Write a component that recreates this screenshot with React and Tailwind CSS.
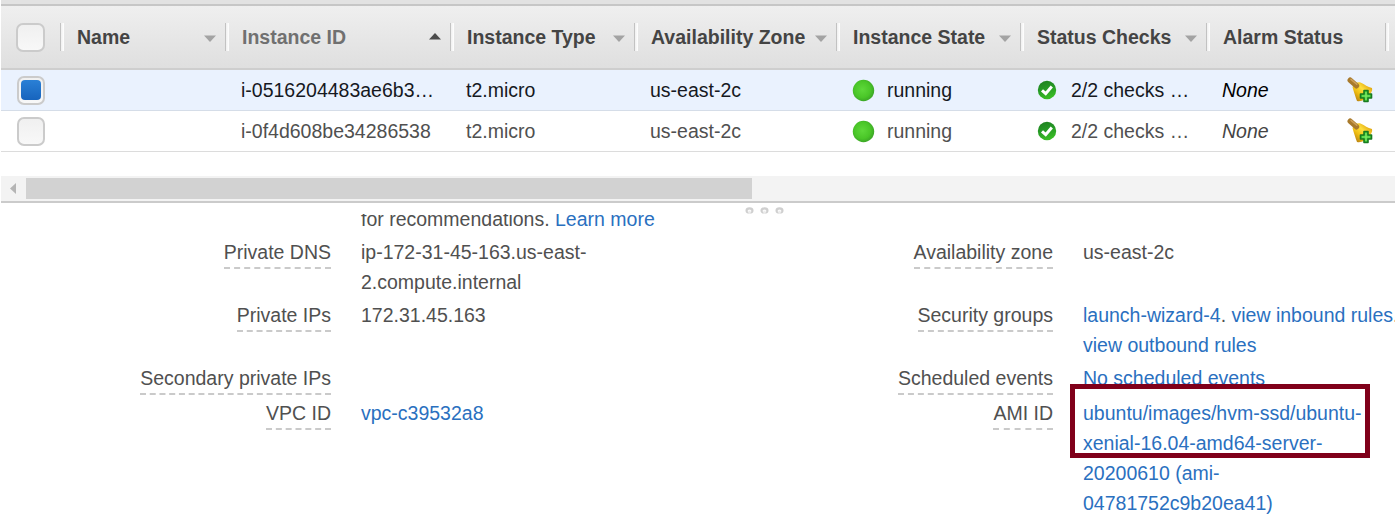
const columns = [
  { title: "Name", width: "w-[165px]", sort: "down" },
  { title: "Instance ID", width: "w-[225px]", sort: "up", muted: true },
  { title: "Instance Type", width: "w-[184px]", sort: "down" },
  { title: "Availability Zone", width: "w-[202px]", sort: "down" },
  { title: "Instance State", width: "w-[184px]", sort: "down" },
  { title: "Status Checks", width: "w-[186px]", sort: "down" },
  { title: "Alarm Status", width: "w-[179px]" },
];

const instances = [
  { id: "i-0516204483ae6b3…", selected: true },
  { id: "i-0f4d608be34286538", selected: false },
];

function SortArrow({ direction }) {
  if (direction === "up") {
    return (
      <svg className="mt-[-1px] h-[7px] w-3 shrink-0" viewBox="0 0 12 7">
        <path d="M0 6.5 6 0l6 6.500z" fill="#4c4c4c" />
      </svg>
    );
  }
  return (
    <svg className="mt-[2px] h-[7px] w-3 shrink-0" viewBox="0 0 12 7">
      <path d="M0 .5h12L6 7z" fill="#a3a3a3" />
    </svg>
  );
}

function Checkbox({ checked, className }) {
  return (
    <div
      className={`flex items-center justify-center rounded-[7px] border-2 border-[#cbcbcb] bg-linear-to-b from-[#f0f0f0] to-[#f8f8f8] ${className}`}
    >
      {checked && <div className="h-[20px] w-[20px] rounded-[4px] bg-linear-to-b from-[#2a80d6] to-[#1764bd]" />}
    </div>
  );
}

function RunningIcon() {
  return (
    <svg className="h-[23px] w-[23px]" viewBox="0 0 23 23">
      <defs>
        <radialGradient id="run" cx="0.45" cy="0.45" r="0.58">
          <stop offset="0" stopColor="#5ed83a" />
          <stop offset="0.65" stopColor="#4ac628" />
          <stop offset="1" stopColor="#3aa326" />
        </radialGradient>
      </defs>
      <circle cx="11.500" cy="11.500" r="10.700" fill="url(#run)" />
    </svg>
  );
}

function CheckIcon() {
  return (
    <svg className="h-[20px] w-[20px]" viewBox="0 0 20 20">
      <defs>
        <linearGradient id="chk" x1="0" y1="0" x2="0.3" y2="1">
          <stop offset="0" stopColor="#1d7d20" />
          <stop offset="0.5" stopColor="#259825" />
          <stop offset="1" stopColor="#38bb24" />
        </linearGradient>
      </defs>
      <circle cx="10" cy="10" r="9.200" fill="url(#chk)" />
      <path d="M5 10.300 8.700 13.700 14.800 6.500" fill="none" stroke="#fff" strokeWidth="3" />
    </svg>
  );
}

function BellIcon() {
  return (
    <svg className="h-[26px] w-[26px]" viewBox="0 0 26 26">
      <defs>
        <linearGradient id="bell" x1="0" y1="1" x2="1" y2="0">
          <stop offset="0.15" stopColor="#c08a12" />
          <stop offset="0.35" stopColor="#efbd12" />
          <stop offset="0.58" stopColor="#ffdf3c" />
          <stop offset="0.85" stopColor="#dfa510" />
        </linearGradient>
      </defs>
      <path
        d="M5.500 10C7 6.500 10 4.800 13.500 5.500c4.500 2 7 4.500 11.500 5.500.8 2.500-.8 5.500-4 8.800-3 3-6.500 5-11 4.200C8.500 20 7 15.500 5.500 10z"
        fill="url(#bell)"
      />
      <path d="M3.200 3.200 9.500 8.800" stroke="#a87a2c" strokeWidth="5.400" strokeLinecap="round" />
      <path d="M4 2.400 9.800 7.300" stroke="#cda058" strokeWidth="1.500" strokeLinecap="round" />
      <path
        d="M17 13.500h4v3.500h3.500v4H21v3.500h-4V21h-3.500v-4H17z"
        fill="#3fcb35"
        stroke="#187a20"
        strokeWidth="1.600"
        strokeLinejoin="round"
      />
      <path d="M19 15v8M15 19h8" stroke="#86ea6c" strokeWidth="1.200" />
    </svg>
  );
}

function HeaderCell({ column }) {
  return (
    <div className={`flex shrink-0 items-center ${column.width}`}>
      <div className="h-[28px] w-[4px] shrink-0 border-l border-[#c2c2c2] bg-linear-to-r from-[#efefef] to-white" />
      <div className="flex flex-1 items-center justify-between pr-[9px] pl-[13px]">
        <span className={`font-bold whitespace-nowrap ${column.muted ? "text-[#707070]" : "text-[#444]"}`}>
          {column.title}
        </span>
        {column.sort && <SortArrow direction={column.sort} />}
      </div>
    </div>
  );
}

function InstanceRow({ instance }) {
  const tone = instance.selected
    ? "bg-[#eaf2fe] border-[#d5dde8] text-[#16191f]"
    : "bg-white border-[#dcdcdc] text-[#505050]";
  return (
    <div className={`flex h-[41px] items-center border-b whitespace-nowrap ${tone}`}>
      <div className="w-[240px] shrink-0 pl-4">
        <Checkbox checked={instance.selected} className="h-[29px] w-[28px]" />
      </div>
      <div className="w-[225px] shrink-0">{instance.id}</div>
      <div className="w-[184px] shrink-0">t2.micro</div>
      <div className="w-[202px] shrink-0">us-east-2c</div>
      <div className="flex w-[185px] shrink-0 items-center gap-[12px]">
        <RunningIcon />
        running
      </div>
      <div className="flex w-[185px] shrink-0 items-center gap-[14px]">
        <CheckIcon />
        2/2 checks …
      </div>
      <div className={`w-[125px] shrink-0 italic ${instance.selected ? "text-black" : "text-[#444]"}`}>None</div>
      <BellIcon />
    </div>
  );
}

function Detail({ label, tall, children }) {
  return (
    <div className={`flex ${tall ? "min-h-[60px]" : "min-h-[32px]"}`}>
      <div className="flex flex-1 items-start justify-end">
        {label && <span className="border-b-2 border-dashed border-[#cacaca] whitespace-nowrap">{label}</span>}
      </div>
      <div className="ml-[30px] w-[316px] whitespace-nowrap">{children}</div>
    </div>
  );
}

function Link({ children }) {
  return <a className="text-[#2a70bf]">{children}</a>;
}

export default function App() {
  return (
    <div className="h-[522px] w-[1395px] overflow-hidden bg-white pl-px font-['Liberation_Sans',Arial,sans-serif] text-[19.5px] leading-[30px] text-[#505050]">
      <div className="h-[6px] border-b-2 border-[#c6c6c6] bg-[#e2e2e2]" />
      <div className="flex h-[64px] items-center border-b-2 border-[#cecece] bg-linear-to-b from-[#efefef] to-[#dfdfdf]">
        <div className="w-[59px] shrink-0 pl-[15px]">
          <Checkbox className="h-[29px] w-[29px]" />
        </div>
        {columns.map((column) => (
          <HeaderCell key={column.title} column={column} />
        ))}
        <div className="h-[28px] w-[4px] shrink-0 border-l border-[#c2c2c2] bg-linear-to-r from-[#efefef] to-white" />
      </div>
      {instances.map((instance) => (
        <InstanceRow key={instance.id} instance={instance} />
      ))}

      <div className="mt-[24px] flex h-[27px] items-center border-b-2 border-[#cbcbcb] bg-[#f3f3f3]">
        <svg className="ml-[9px] h-[11px] w-[6px]" viewBox="0 0 6 11">
          <path d="M6 0v11L0 5.500z" fill="#b5b5b5" />
        </svg>
        <div className="ml-[10px] h-[21px] w-[726px] bg-[#d2d2d2]" />
      </div>

      <div className="relative mt-[11px] grid h-[308px] grid-cols-[676px_722px]">
        <svg className="absolute -top-[7px] left-[744px] h-[7px] w-[40px]" viewBox="0 0 40 7">
          {[4.5, 19.5, 34.5].map((x) => (
            <g key={x}>
              <ellipse cx={x} cy="3.500" rx="4" ry="3.200" fill="#cfcfcf" />
              <ellipse cx={x} cy="4" rx="1.900" ry="1.600" fill="#fafafa" />
              <path d={`M${x - 1} 4h2v3h-2z`} fill="#ececec" />
            </g>
          ))}
        </svg>
        <div className="flex flex-col gap-[3px] overflow-hidden">
          <div className="-mt-[10px] ml-[360px] h-[30px] whitespace-nowrap">
            for recommendations. <Link>Learn more</Link>
          </div>
          <Detail label="Private DNS" tall>
            ip-172-31-45-163.us-east-
            <br />
            2.compute.internal
          </Detail>
          <Detail label="Private IPs" tall>
            172.31.45.163
          </Detail>
          <Detail label="Secondary private IPs" />
          <Detail label="VPC ID">
            <Link>vpc-c39532a8</Link>
          </Detail>
        </div>
        <div className="flex flex-col gap-[3px] pt-[23px]">
          <Detail label="Availability zone" tall>
            us-east-2c
          </Detail>
          <Detail label="Security groups" tall>
            <Link>launch-wizard-4</Link>. <Link>view inbound rules</Link>.
            <br />
            <Link>view outbound rules</Link>
          </Detail>
          <Detail label="Scheduled events">
            <Link>No scheduled events</Link>
          </Detail>
          <Detail label="AMI ID">
            <Link>
              ubuntu/images/hvm-ssd/ubuntu-
              <br />
              xenial-16.04-amd64-server-
              <br />
              20200610 (ami-
              <br />
              04781752c9b20ea41)
            </Link>
          </Detail>
        </div>
        <div className="absolute top-[170px] left-[1069px] h-[74px] w-[300px] border-[5px] border-[#80001a]" />
      </div>
    </div>
  );
}
